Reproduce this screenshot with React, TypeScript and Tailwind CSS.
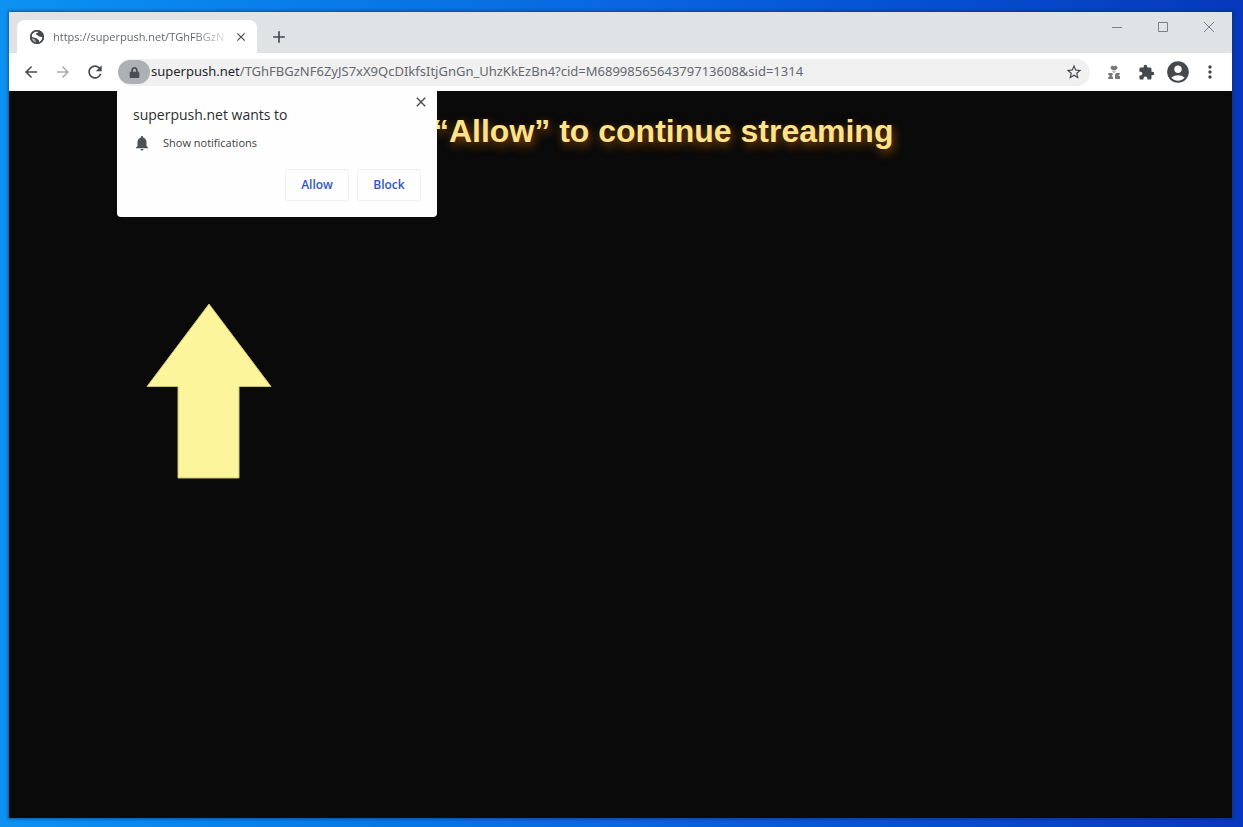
import React from "react";
import { FaLock } from "react-icons/fa";
import {
  MdAccountCircle,
  MdAdd,
  MdArrowBack,
  MdArrowForward,
  MdClose,
  MdExtension,
  MdMoreVert,
  MdNotifications,
  MdRefresh,
  MdStarBorder,
} from "react-icons/md";

const PATH = "/TGhFBGzNF6ZyJS7xX9QcDIkfsItjGnGn_UhzKkEzBn4?cid=M6899856564379713608&sid=1314";

function IconButton({
  label,
  className = "w-8",
  children,
}: {
  label: string;
  className?: string;
  children: React.ReactNode;
}) {
  return (
    <button type="button" aria-label={label} className={`flex h-7 shrink-0 items-center justify-center ${className}`}>
      {children}
    </button>
  );
}

function GlobeIcon() {
  return (
    <svg width="16" height="16" viewBox="0 0 16 16" className="mr-2 shrink-0" aria-hidden="true">
      <circle cx="8" cy="8" r="7" fill="#45494e" />
      <path
        d="M8.500 2.200C9.500 3 8.800 4 7.600 4.200C6.500 4.500 6.800 5.600 7.800 5.900C9.300 6.200 9 7.300 10.300 7.400C11.800 7.400 11.600 8.400 13.700 8C13.600 10.500 12 12.500 10.200 13.200C9.800 12.200 10.400 11.400 9.300 10.800C8.200 10.300 8.200 9.300 6.800 9C5 8.700 3.800 8.300 2.500 7.200C2.800 4.500 5 2.300 8.500 2.200z"
        fill="#fff"
      />
      <path d="M2.500 8.900C4 9.600 6 9.800 6.300 10.900C6.500 12 7.300 12.300 7.300 13.700C4.500 13.500 2.700 11.400 2.500 8.900z" fill="#fff" opacity=".55" />
      <circle cx="8" cy="8" r="6.300" fill="none" stroke="#45494e" strokeWidth="1.500" />
    </svg>
  );
}

function FlowerExtensionIcon() {
  return (
    <svg width="14" height="16" viewBox="0 0 14 16" fill="#77777a" aria-hidden="true">
      <path d="M3.500 3.200L5 1.500L7 2.300L9 1.500L10.500 3.200L10 5L8.300 6.300H5.700L4 5z" />
      <path d="M4.500 7.200h5L7 9z" opacity=".6" />
      <path d="M1.500 9h3.700L6 10.500L4.500 12L6 13v2H1.200v-1.800L3 12L1.200 11zM9 9h3.800v1.600L11 11.200l2 .8v3H8.200L8 11z" />
    </svg>
  );
}

function TabStrip() {
  return (
    <header className="flex h-[41px] items-end bg-[#dfe3e6] pl-2">
      <div className="flex h-[33px] w-60 items-center rounded-t-lg bg-white pl-3 pr-2">
        <GlobeIcon />
        <a
          href="#page"
          className="flex-1 whitespace-nowrap bg-linear-to-r from-[#5b5f64] from-80% to-[#e4e5e6] bg-clip-text text-[11px] leading-5 text-transparent"
        >
          https://superpush.net/TGhFBGzN
        </a>
        <button type="button" aria-label="Close tab" className="ml-2 flex size-4 items-center justify-center text-[#45494e]">
          <MdClose size={14} />
        </button>
      </div>
      <button type="button" aria-label="New tab" className="ml-3 flex h-8 w-5 items-center justify-center text-[#45494e]">
        <MdAdd size={20} />
      </button>
      <div className="ml-auto flex self-start text-[#7c8087]">
        <button type="button" aria-label="Minimize" className="flex h-[30px] w-[46px] items-center justify-center">
          <svg width="12" height="12" viewBox="0 0 12 12" fill="none" stroke="currentColor" aria-hidden="true">
            <path d="M1 6.500h10" />
          </svg>
        </button>
        <button type="button" aria-label="Maximize" className="flex h-[30px] w-[46px] items-center justify-center">
          <svg width="12" height="12" viewBox="0 0 12 12" fill="none" stroke="currentColor" aria-hidden="true">
            <path d="M1.500 1.500h9v9h-9z" />
          </svg>
        </button>
        <button type="button" aria-label="Close window" className="flex h-[30px] w-[46px] items-center justify-center">
          <svg width="12" height="12" viewBox="0 0 12 12" fill="none" stroke="currentColor" aria-hidden="true">
            <path d="M1 1l10 10M11 1L1 11" />
          </svg>
        </button>
      </div>
    </header>
  );
}

function PermissionPrompt() {
  return (
    <section
      role="dialog"
      aria-labelledby="prompt-title"
      className="absolute left-[108px] top-[35px] z-10 w-80 rounded-sm bg-[#fefefe] px-4 pb-4 pt-[15px]"
    >
      <button type="button" aria-label="Dismiss" className="absolute right-2 top-[6px] flex size-4 items-center justify-center text-[#45494e]">
        <MdClose size={16} />
      </button>
      <h2 id="prompt-title" className="text-[14px] leading-6 text-[#2c2d30]">
        superpush.net wants to
      </h2>
      <p className="mt-1 flex h-6 items-center text-[11px] text-[#3f4145]">
        <MdNotifications size={18} className="mr-3 text-[#4d5156]" />
        Show notifications
      </p>
      <div className="mt-[14px] flex justify-end gap-2">
        {["Allow", "Block"].map((name) => (
          <button
            key={name}
            type="button"
            className="h-8 w-16 rounded-[3px] border border-[#eff0f2] text-[12px] font-semibold text-[#2f56c8]"
          >
            {name}
          </button>
        ))}
      </div>
    </section>
  );
}

function Toolbar() {
  return (
    <div className="relative flex h-[38px] items-center bg-white px-[6px] text-[#45494e]">
      <IconButton label="Back">
        <MdArrowBack size={18} />
      </IconButton>
      <IconButton label="Forward">
        <MdArrowForward size={18} className="text-[#a9abae]" />
      </IconButton>
      <IconButton label="Reload">
        <MdRefresh size={20} />
      </IconButton>
      <form className="ml-[7px] flex h-[27px] min-w-0 flex-1 items-center rounded-full bg-[#f0f0f1] font-['Noto_Sans',sans-serif] text-[13px]">
        <button type="button" aria-label="View site information" className="flex h-6 w-8 shrink-0 items-center justify-center rounded-full bg-[#adb0b4]">
          <FaLock size={11} className="text-[#4a4d52]" />
        </button>
        <label htmlFor="address" className="ml-px text-[#26282b]">
          superpush.net
        </label>
        <input id="address" type="text" readOnly value={PATH} className="min-w-0 flex-1 bg-transparent text-[#65686c] outline-none" />
        <IconButton label="Bookmark this page">
          <MdStarBorder size={18} />
        </IconButton>
      </form>
      <IconButton label="Extension" className="ml-2 w-8">
        <FlowerExtensionIcon />
      </IconButton>
      <IconButton label="Extensions">
        <MdExtension size={17} />
      </IconButton>
      <IconButton label="Profile">
        <MdAccountCircle size={26} />
      </IconButton>
      <IconButton label="Menu">
        <MdMoreVert size={20} />
      </IconButton>
      <PermissionPrompt />
    </div>
  );
}

export default function App() {
  return (
    <div className="flex min-h-screen bg-linear-to-r from-[#0d92f2] via-[#0a66df] via-50% to-[#0737bd] pb-[9px] pl-[9px] pr-[11px] pt-3 font-['Open_Sans',sans-serif]">
      <div className="flex min-w-0 flex-1 flex-col shadow-[0_0_3px_1px_rgba(20,40,80,0.6)]">
        <TabStrip />
        <Toolbar />
        <main id="page" className="flex-1 bg-[#0a0a0a] pt-5">
          <h1 className="text-center font-['Liberation_Sans',sans-serif] text-[32px] font-bold leading-10 text-[#ffe28a] [text-shadow:2px_4px_10px_#8a4a08]">
            Click “Allow” to continue streaming
          </h1>
          <svg width="126" height="176" viewBox="0 0 126 176" className="ml-[137px] mt-[152px]" role="img" aria-label="Up arrow">
            <path d="M63 1L125 83.500H93V175H32V83.500H1z" fill="#fcf59b" stroke="#c9c274" strokeWidth="1" />
          </svg>
        </main>
      </div>
    </div>
  );
}
